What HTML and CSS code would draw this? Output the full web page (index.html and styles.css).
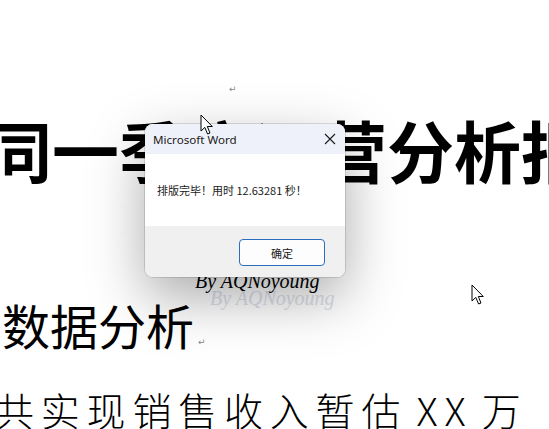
FILE: index.html
```html
<!DOCTYPE html>
<html lang="zh-CN">
<head>
<meta charset="utf-8">
<link rel="stylesheet" href="styles.css">
</head>
<body>
<div class="doc">
  <div class="mark-line"><span class="pmark">↵</span></div>
  <h1 class="title">同一季度运营分析报告</h1>
  <h2 class="sub">数据分析<span class="pmark small">↵</span></h2>
  <p class="body">共实现销售收入暂估 XX 万</p>
</div>

<div class="wm wm-shadow">By AQNoyoung</div>
<div class="wm">By AQNoyoung</div>

<div class="dialog">
  <div class="dlg-title">
    <span>Microsoft Word</span>
    <svg class="close" width="12" height="12" viewBox="0 0 12 12"><path d="M1 1 L11 11 M11 1 L1 11" stroke="#1a1a1a" stroke-width="1.1" fill="none"/></svg>
  </div>
  <div class="dlg-body">排版完毕！用时 12.63281 秒！</div>
  <div class="dlg-foot"><button class="btn">确定</button></div>
</div>

<svg class="cursor c1" width="14" height="22" viewBox="0 0 14 22"><path d="M1 1 L1 17 L4.8 13.4 L7.6 20 L10 19 L7.3 12.5 L12.3 12.5 Z" fill="#fff" stroke="#000" stroke-width="1" stroke-linejoin="round"/></svg>
<svg class="cursor c2" width="14" height="22" viewBox="0 0 14 22"><path d="M1 1 L1 17 L4.8 13.4 L7.6 20 L10 19 L7.3 12.5 L12.3 12.5 Z" fill="#fff" stroke="#000" stroke-width="1" stroke-linejoin="round"/></svg>
</body>
</html>
```
FILE: styles.css
```css
html, body {
  margin: 0;
  padding: 0;
  background: #fff;
  width: 549px;
  height: 429px;
  overflow: hidden;
}
.doc {
  display: flex;
  flex-direction: column;
  font-family: "Noto Sans CJK SC", sans-serif;
  color: #000;
  white-space: nowrap;
}
.mark-line {
  padding-top: 80px;
  padding-left: 229px;
  height: 10px;
  line-height: 10px;
}
.pmark {
  font-family: "DejaVu Sans", sans-serif;
  font-size: 9px;
  color: #888;
  font-weight: 400;
}
.title {
  margin: 25px 0 0 -15px;
  font-size: 67px;
  line-height: 67px;
  font-weight: 700;
  height: 67px;
}
.sub {
  margin: 118px 0 0 2px;
  font-size: 48px;
  line-height: 48px;
  font-weight: 400;
  height: 48px;
}
.sub .small {
  font-size: 9px;
  margin-left: 4px;
}
.body {
  margin: 41px 0 0 -5px;
  font-size: 39px;
  line-height: 40px;
  font-weight: 300;
  letter-spacing: 6.8px;
  word-spacing: -6px;
}
.wm {
  position: absolute;
  left: 195px;
  top: 271px;
  font-family: "Liberation Serif", serif;
  font-style: italic;
  font-size: 20px;
  line-height: 20px;
  color: #000;
}
.wm-shadow {
  left: 210px;
  top: 288px;
  color: #dde1ec;
}
.dialog {
  position: absolute;
  left: 145px;
  top: 124px;
  width: 200px;
  height: 153px;
  border-radius: 8px;
  overflow: hidden;
  background: #fff;
  box-shadow: 0 0 0 1px rgba(0,0,0,0.12), 0 20px 56px rgba(0,0,0,0.34);
  display: flex;
  flex-direction: column;
  font-family: "Noto Sans CJK SC", "Noto Sans", sans-serif;
}
.dlg-title {
  height: 30px;
  background: #eef1f9;
  display: flex;
  align-items: center;
  justify-content: space-between;
  padding: 0 9px 0 8px;
  font-family: "Noto Sans", "Noto Sans CJK SC", sans-serif;
  font-size: 11.6px;
  color: #1a1a1a;
}
.close {
  display: block;
}
.dlg-body {
  height: 72px;
  display: flex;
  align-items: center;
  padding-left: 12px;
  font-size: 11px;
  color: #1a1a1a;
}
.dlg-foot {
  flex: 1;
  background: #f0f0f0;
  display: flex;
  justify-content: flex-end;
  align-items: flex-start;
  padding: 13px 20px 0 0;
}
.btn {
  width: 86px;
  height: 27px;
  border: 1px solid #2a6fbd;
  border-radius: 4px;
  background: #fdfdfd;
  font-family: "Noto Sans CJK SC", sans-serif;
  font-size: 11px;
  color: #1a1a1a;
  padding: 0;
}
.cursor {
  position: absolute;
}
.c1 { left: 200px; top: 114px; }
.c2 { left: 471px; top: 284px; }
```
